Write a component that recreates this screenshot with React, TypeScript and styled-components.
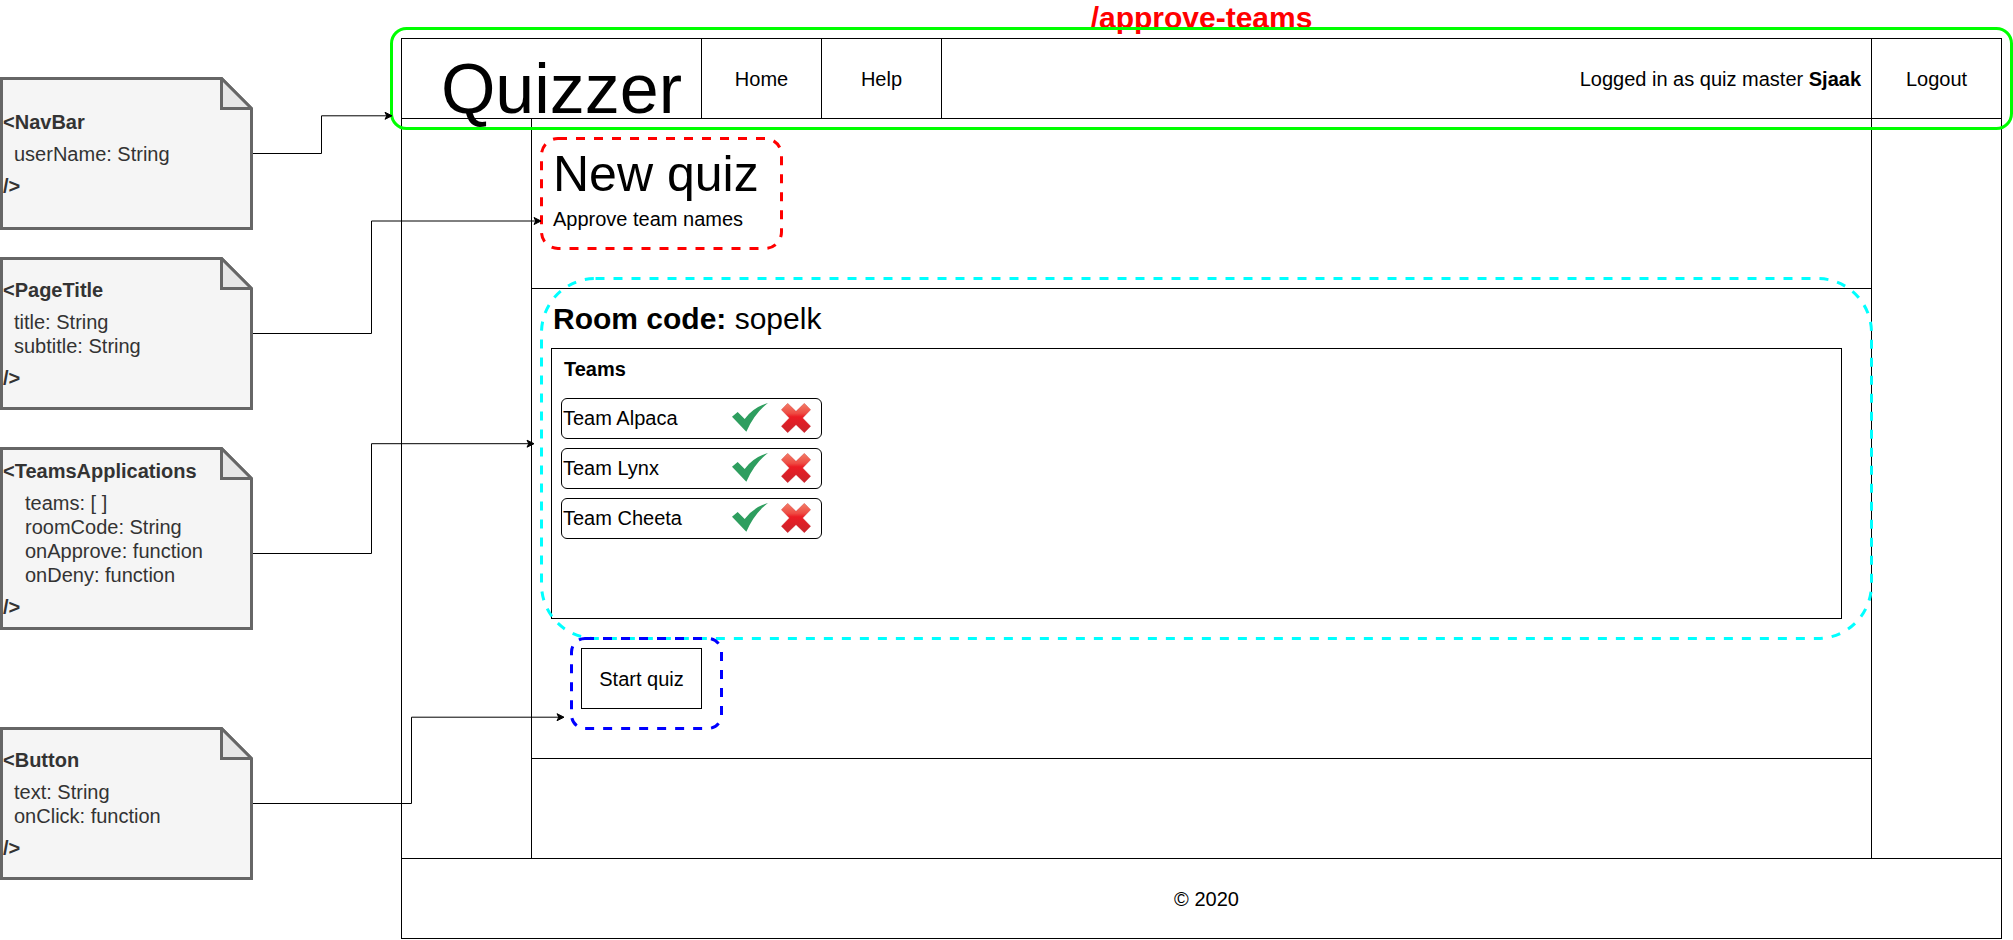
import React from "react";
import styled, { createGlobalStyle } from "styled-components";

const GlobalStyle = createGlobalStyle`
  *, *::before, *::after { box-sizing: border-box; }
  body {
    margin: 0;
    background: #fff;
    color: #000;
    font: 20px/24px "Liberation Sans", Arial, Helvetica, sans-serif;
  }
  h1, h2, h3, p, ul { margin: 0; padding: 0; }
  ul { list-style: none; }
  a { color: inherit; text-decoration: none; }
  button {
    margin: 0;
    padding: 0;
    border: 0;
    background: none;
    color: inherit;
    font: inherit;
    cursor: pointer;
  }
`;

const line = "1px solid #000";

/* ---------- canvas ---------- */

const Canvas = styled.div`
  position: relative;
  display: flex;
  gap: 148px;
  padding-right: 11px;
`;

const NotesColumn = styled.aside`
  flex: none;
  width: 253px;
  padding-top: 77px;
`;

const Wireframe = styled.div`
  flex: 1;
  min-width: 0;
`;

const Connectors = styled.svg`
  position: absolute;
  top: 0;
  left: 0;
  pointer-events: none;
`;

/* ---------- notes ---------- */

const NoteCard = styled.section<{ $height: number; $above: number }>`
  position: relative;
  display: flex;
  flex-direction: column;
  justify-content: center;
  gap: 8px;
  min-height: ${(p) => p.$height}px;
  margin-top: ${(p) => p.$above}px;
  padding-left: 3px;
  color: #333;
`;

const NoteShape = styled.svg`
  position: absolute;
  inset: 0;
  z-index: -1;
`;

const NoteTag = styled.p`
  font-weight: bold;
`;

const NoteProps = styled.ul<{ $indent: number }>`
  padding-left: ${(p) => p.$indent}px;
`;

type NoteData = {
  tag: string;
  props: string[];
  height: number;
  above: number;
  indent: number;
};

const notes: NoteData[] = [
  { tag: "NavBar", props: ["userName: String"], height: 153, above: 0, indent: 11 },
  { tag: "PageTitle", props: ["title: String", "subtitle: String"], height: 153, above: 27, indent: 11 },
  {
    tag: "TeamsApplications",
    props: ["teams: [ ]", "roomCode: String", "onApprove: function", "onDeny: function"],
    height: 183,
    above: 37,
    indent: 22,
  },
  { tag: "Button", props: ["text: String", "onClick: function"], height: 153, above: 97, indent: 11 },
];

function Note({ tag, props, height, above, indent }: NoteData) {
  const bottom = height - 1.5;
  return (
    <NoteCard $height={height} $above={above}>
      <NoteShape width="253" height={height} aria-hidden="true">
        <g stroke="#666" strokeWidth="3" strokeMiterlimit="10">
          <path d={`M1.5 1.5H221.5L251.5 31.5V${bottom}H1.5Z`} fill="#f5f5f5" />
          <path d="M221.5 1.5V31.5H251.5Z" fill="#e6e6e6" />
        </g>
      </NoteShape>
      <NoteTag>&lt;{tag}</NoteTag>
      <NoteProps $indent={indent}>
        {props.map((p) => (
          <li key={p}>{p}</li>
        ))}
      </NoteProps>
      <NoteTag>/&gt;</NoteTag>
    </NoteCard>
  );
}

/* ---------- outlines ---------- */

const OutlineBox = styled.div<{ $inset: string }>`
  position: absolute;
  inset: ${(p) => p.$inset};
  pointer-events: none;

  svg {
    display: block;
    width: 100%;
    height: 100%;
  }

  rect {
    width: calc(100% - 3px);
    height: calc(100% - 3px);
    fill: none;
    stroke-width: 3px;
  }
`;

function Outline(props: { inset: string; color: string; radius: number; solid?: boolean }) {
  return (
    <OutlineBox $inset={props.inset} aria-hidden="true">
      <svg>
        <rect
          x="1.5"
          y="1.5"
          rx={props.radius}
          stroke={props.color}
          strokeDasharray={props.solid ? undefined : "9 9"}
        />
      </svg>
    </OutlineBox>
  );
}

/* ---------- navigation ---------- */

const RouteName = styled.p`
  height: 38px;
  color: #f00;
  font-size: 30px;
  font-weight: bold;
  line-height: 36px;
  text-align: center;
`;

const NavBar = styled.header`
  position: relative;
`;

const NavRow = styled.nav`
  display: flex;
  height: 81px;
  border: ${line};
`;

const Brand = styled.div`
  display: flex;
  align-items: center;
  justify-content: center;
  width: 299px;
  padding: 20px 0 0 20px;
  font-size: 70px;
  line-height: 60px;
`;

const NavLink = styled.a`
  display: flex;
  align-items: center;
  justify-content: center;
  width: 120px;
  border-left: ${line};
`;

const UserInfo = styled.p`
  display: flex;
  flex: 1;
  align-items: center;
  justify-content: flex-end;
  padding-right: 10px;
  border-left: ${line};
  white-space: pre;
`;

const LogoutButton = styled.button`
  width: 130px;
  border-left: ${line};
`;

/* ---------- page body ---------- */

const Body = styled.div`
  display: flex;
  border: ${line};
  border-top: 0;
`;

const Gutter = styled.div`
  flex: none;
  width: 129px;
`;

const Main = styled.main`
  flex: 1;
  min-width: 0;
  border: ${line};
  border-width: 0 1px;
`;

const TitleSection = styled.section`
  padding: 21px 11px 41px;
  border-bottom: ${line};
`;

const PageTitle = styled.div`
  position: relative;
  width: fit-content;
  min-width: 237px;
  padding: 4px 20px 16px 10px;

  h1 {
    font-size: 50px;
    font-weight: normal;
    line-height: 60px;
  }

  p {
    margin-top: 3px;
  }
`;

const QuizSection = styled.section`
  padding: 0 29px 49px 19px;
  border-bottom: ${line};
`;

const TeamsApplications = styled.div`
  position: relative;
  padding-top: 12px;
`;

const RoomCode = styled.h2`
  margin-bottom: 11px;
  padding-left: 2px;
  font-size: 30px;
  font-weight: normal;
  line-height: 36px;
`;

const TeamsPanel = styled.div`
  padding: 8px 9px 79px;
  border: ${line};

  h3 {
    padding-left: 3px;
    font-size: 20px;
  }
`;

const TeamList = styled.ul`
  display: grid;
  gap: 9px;
  width: 261px;
  margin-top: 17px;
`;

const TeamRow = styled.li`
  display: flex;
  align-items: center;
  height: 41px;
  padding: 0 10px 1px 1px;
  border: ${line};
  border-radius: 6px;
`;

const TeamName = styled.span`
  flex: 1;
`;

const IconButton = styled.button`
  margin-left: 13px;

  svg {
    display: block;
  }
`;

const StartWrap = styled.div`
  position: relative;
  width: fit-content;
  margin: 29px 0 0 30px;
`;

const StartButton = styled.button`
  display: block;
  width: 121px;
  height: 61px;
  border: ${line};
  background: #fff;
`;

const EmptySection = styled.section`
  height: 99px;
`;

const Footer = styled.footer`
  padding: 28px 0 27px 10px;
  border: ${line};
  border-top: 0;
  text-align: center;
`;

/* ---------- icons ---------- */

function CheckIcon() {
  return (
    <svg width="36" height="30" viewBox="0 0 108 90" aria-hidden="true">
      <path d="M0 41L17 27L38 48Q64 13 108 0Q68 30 43 86Z" fill="#2e9e5f" />
    </svg>
  );
}

function CrossIcon() {
  return (
    <svg width="30" height="30" viewBox="0 0 90 90" aria-hidden="true">
      <defs>
        <linearGradient id="cross-fill" x1="0" y1="0" x2="0" y2="1">
          <stop offset="0" stopColor="#f27f68" />
          <stop offset="0.34" stopColor="#ee4b43" />
          <stop offset="0.46" stopColor="#ec1c24" />
          <stop offset="0.7" stopColor="#dc1f27" />
          <stop offset="1" stopColor="#c9252c" />
        </linearGradient>
      </defs>
      <path
        d="M20 1L45 25L70 1L89 20L65 45L89 70L70 89L45 65L20 89L1 70L25 45L1 20Z"
        fill="url(#cross-fill)"
        stroke="#c9303a"
        strokeOpacity="0.5"
        strokeWidth="2"
        strokeLinejoin="round"
      />
    </svg>
  );
}

/* ---------- connectors ---------- */

const connectors = [
  { from: 153.5, bend: 321.5, to: 115.8, tip: 392 },
  { from: 333.5, bend: 371.5, to: 221, tip: 541 },
  { from: 553.5, bend: 371.5, to: 443.7, tip: 534 },
  { from: 803.5, bend: 411.5, to: 717.2, tip: 564 },
];

const teams = ["Team Alpaca", "Team Lynx", "Team Cheeta"];

export default function App() {
  return (
    <>
      <GlobalStyle />
      <Canvas>
        <NotesColumn>
          {notes.map((n) => (
            <Note key={n.tag} {...n} />
          ))}
        </NotesColumn>

        <Wireframe>
          <RouteName>/approve-teams</RouteName>

          <NavBar>
            <NavRow>
              <Brand>Quizzer</Brand>
              <NavLink href="#home">Home</NavLink>
              <NavLink href="#help">Help</NavLink>
              <UserInfo>
                Logged in as quiz master <strong>Sjaak</strong>
              </UserInfo>
              <LogoutButton type="button">Logout</LogoutButton>
            </NavRow>
            <Outline inset="-11px" color="#0f0" radius={15} solid />
          </NavBar>

          <Body>
            <Gutter />
            <Main>
              <TitleSection>
                <PageTitle>
                  <h1>New quiz</h1>
                  <p>Approve team names</p>
                  <Outline inset="-3px" color="#f00" radius={16.5} />
                </PageTitle>
              </TitleSection>

              <QuizSection>
                <TeamsApplications>
                  <RoomCode>
                    <strong>Room code:</strong> sopelk
                  </RoomCode>
                  <TeamsPanel>
                    <h3>Teams</h3>
                    <TeamList>
                      {teams.map((team) => (
                        <TeamRow key={team}>
                          <TeamName>{team}</TeamName>
                          <IconButton type="button" aria-label={`Approve ${team}`}>
                            <CheckIcon />
                          </IconButton>
                          <IconButton type="button" aria-label={`Deny ${team}`}>
                            <CrossIcon />
                          </IconButton>
                        </TeamRow>
                      ))}
                    </TeamList>
                  </TeamsPanel>
                  <Outline inset="-12px -31px -21px -11px" color="#0ff" radius={54} />
                </TeamsApplications>

                <StartWrap>
                  <StartButton type="button">Start quiz</StartButton>
                  <Outline inset="-11px -21px -21px -11px" color="#00f" radius={13.5} />
                </StartWrap>
              </QuizSection>

              <EmptySection />
            </Main>
            <Gutter />
          </Body>

          <Footer>© 2020</Footer>
        </Wireframe>

        <Connectors width="600" height="880" aria-hidden="true">
          {connectors.map((c) => (
            <g key={c.from} stroke="#000" strokeMiterlimit="10">
              <path d={`M253 ${c.from}H${c.bend}V${c.to}H${c.tip - 5}`} fill="none" />
              <path d={`M${c.tip} ${c.to}l-7 3.5l1.75 -3.5l-1.75 -3.5Z`} />
            </g>
          ))}
        </Connectors>
      </Canvas>
    </>
  );
}
